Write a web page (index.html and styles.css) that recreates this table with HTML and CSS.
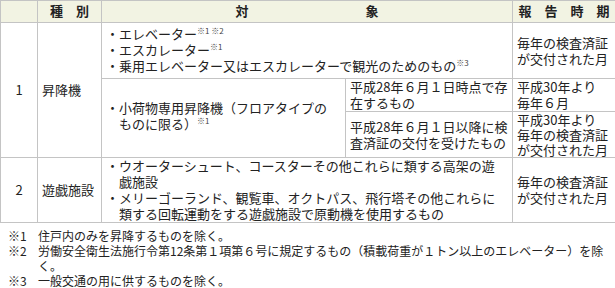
FILE: index.html
```html
<!DOCTYPE html>
<html lang="ja">
<head>
<meta charset="utf-8">
<link rel="stylesheet" href="styles.css">
</head>
<body>
<table class="tbl">
  <colgroup>
    <col class="c-no">
    <col class="c-kind">
    <col class="c-obj">
    <col class="c-sub">
    <col class="c-time">
  </colgroup>
  <thead>
    <tr>
      <th></th>
      <th>種　別</th>
      <th colspan="2">対　　　　　　　　　象</th>
      <th>報　告　時　期</th>
    </tr>
  </thead>
  <tbody>
    <tr>
      <td class="no" rowspan="3">1</td>
      <td class="kind" rowspan="3">昇降機</td>
      <td class="obj obj-a" colspan="2">
        <ul class="bullets">
          <li>エレベーター<sup>※1 ※2</sup></li>
          <li>エスカレーター<sup>※1</sup></li>
          <li>乗用エレベーター又はエスカレーターで観光のためのもの<sup>※3</sup></li>
        </ul>
      </td>
      <td class="time">毎年の検査済証<br>が交付された月</td>
    </tr>
    <tr>
      <td class="obj obj-b" rowspan="2">
        <ul class="bullets">
          <li>小荷物専用昇降機（フロアタイプの<br>ものに限る）<sup>※1</sup></li>
        </ul>
      </td>
      <td class="sub">平成28年６月１日時点で存<br>在するもの</td>
      <td class="time">平成30年より<br>毎年６月</td>
    </tr>
    <tr>
      <td class="sub">平成28年６月１日以降に検<br>査済証の交付を受けたもの</td>
      <td class="time time-tight">平成30年より<br>毎年の検査済証<br>が交付された月</td>
    </tr>
    <tr>
      <td class="no">2</td>
      <td class="kind">遊戯施設</td>
      <td class="obj obj-c" colspan="2">
        <ul class="bullets">
          <li>ウオーターシュート、コースターその他これらに類する高架の遊<br>戯施設</li>
          <li>メリーゴーランド、観覧車、オクトパス、飛行塔その他これらに<br>類する回転運動をする遊戯施設で原動機を使用するもの</li>
        </ul>
      </td>
      <td class="time">毎年の検査済証<br>が交付された月</td>
    </tr>
  </tbody>
</table>

<dl class="notes">
  <dt>※1</dt><dd>住戸内のみを昇降するものを除く。</dd>
  <dt>※2</dt><dd>労働安全衛生法施行令第12条第１項第６号に規定するもの（積載荷重が１トン以上のエレベーター）を除く。</dd>
  <dt>※3</dt><dd>一般交通の用に供するものを除く。</dd>
</dl>
</body>
</html>
```

FILE: styles.css
```css
html, body {
  margin: 0;
  padding: 0;
  background: #ffffff;
}

body {
  font-family: "Noto Sans CJK JP", "Noto Sans", sans-serif;
  font-size: 13px;
  line-height: 16px;
  color: #222222;
}

.tbl {
  width: 615px;
  table-layout: fixed;
  border-collapse: collapse;
}

.c-no { width: 37px; }
.c-kind { width: 64px; }
.c-obj { width: 244px; }
.c-sub { width: 167px; }
.c-time { width: 103px; }

.tbl th,
.tbl td {
  border: 1px solid #c4c4c4;
  padding: 0 4px;
  vertical-align: middle;
  text-align: left;
  font-weight: normal;
  white-space: nowrap;
}

.tbl th {
  background: #f2f3e3;
  font-weight: bold;
  text-align: center;
  padding: 2px 4px 3px;
  color: #222222;
}

.tbl td.no {
  text-align: center;
}

.tbl td.obj-a {
  padding-top: 3px;
  padding-bottom: 4px;
}

.tbl td.obj-b {
  padding-bottom: 4px;
}

.bullets {
  list-style: none;
  margin: 0;
  padding: 0 0 0 13px;
}

.bullets li {
  text-indent: -13px;
}

.bullets li::before {
  content: "・";
}

sup {
  font-size: 8px;
  line-height: 0;
  vertical-align: 5px;
  color: #444444;
}

.tbl td.time-tight {
  line-height: 15px;
}

.notes {
  display: grid;
  grid-template-columns: 30px 1fr;
  margin: 5px 10px 0 8px;
  font-size: 12px;
  line-height: 15px;
}

.notes dt,
.notes dd {
  margin: 0;
}
```
